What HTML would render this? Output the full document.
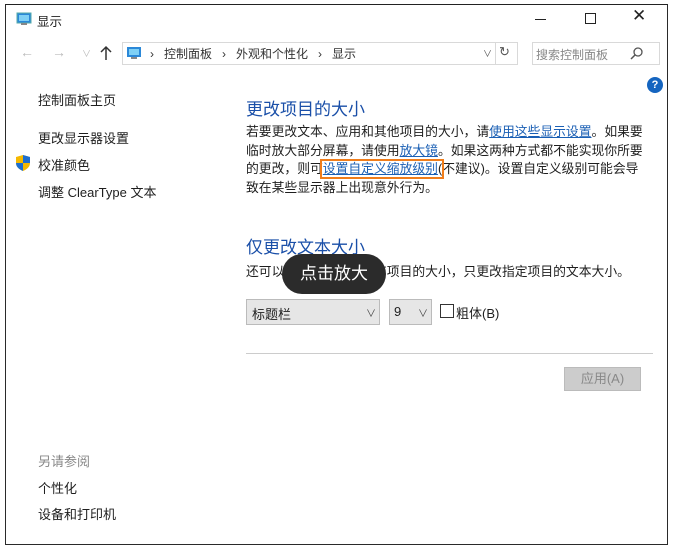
<!DOCTYPE html>
<html><head><meta charset="utf-8"><style>
*{margin:0;padding:0;box-sizing:border-box}
body{width:681px;height:548px;background:#fff;position:relative;overflow:hidden;font-family:"Liberation Sans","Noto Sans CJK SC",sans-serif;color:#1e1e1e}
.a{position:absolute;white-space:nowrap}
.win{position:absolute;left:5px;top:4px;width:663px;height:541px;border:1px solid #2a2a2a;border-top:1.5px solid #222}
.link{color:#1a5fb4;text-decoration:underline}
.t13{font-size:13px}
</style></head><body>
<div class="win"></div>
<svg class="a" style="left:16px;top:12px" width="16" height="14"><rect x="1" y="1" width="14" height="10" fill="#2b88d8" stroke="#5aa" stroke-width="1"/><rect x="3" y="3" width="10" height="6" fill="#7fd0f5"/><rect x="5" y="11" width="6" height="2" fill="#888"/></svg>
<div class="a t13" style="left:37px;top:11px;font-size:12.5px">显示</div>
<div class="a" style="left:535px;top:19px;width:11px;height:1px;background:#222"></div>
<div class="a" style="left:585px;top:13px;width:11px;height:11px;border:1px solid #222"></div>
<div class="a" style="left:632px;top:6px;font-size:17px;color:#222">✕</div>
<div class="a" style="left:20px;top:44px;color:#bbb;font-size:14px">←</div>
<div class="a" style="left:52px;top:44px;color:#bbb;font-size:14px">→</div>
<div class="a" style="left:82px;top:47px;color:#bbb;font-size:9px">∨</div>
<svg class="a" style="left:100px;top:45px" width="12" height="16"><path d="M6 2 V15 M1 7 L6 2 L11 7" stroke="#333" stroke-width="1.5" fill="none"/></svg>
<div class="a" style="left:122px;top:42px;width:396px;height:23px;border:1px solid #d9d9d9"></div>
<div class="a" style="left:495px;top:42px;width:1px;height:23px;background:#d9d9d9"></div>
<svg class="a" style="left:126px;top:46px" width="16" height="14"><rect x="1" y="1" width="14" height="10" fill="#2b88d8"/><rect x="3" y="3" width="10" height="6" fill="#7fd0f5"/><rect x="5" y="11" width="6" height="2" fill="#888"/></svg>
<div class="a" style="left:150px;top:45px;font-size:12px;color:#333">›&nbsp;&nbsp; 控制面板 &nbsp;&nbsp;›&nbsp;&nbsp; 外观和个性化 &nbsp;&nbsp;›&nbsp;&nbsp; 显示</div>
<div class="a" style="left:483px;top:47px;font-size:9px;color:#555">∨</div>
<div class="a" style="left:499px;top:44px;font-size:13px;color:#555">↻</div>
<div class="a" style="left:532px;top:42px;width:128px;height:23px;border:1px solid #d9d9d9"></div>
<div class="a" style="left:536px;top:46px;font-size:12px;color:#888">搜索控制面板</div>
<svg class="a" style="left:630px;top:46px" width="14" height="14"><circle cx="8" cy="6" r="4" stroke="#555" stroke-width="1.3" fill="none"/><path d="M5 9 L1 13" stroke="#555" stroke-width="1.5"/></svg>
<div class="a" style="left:647px;top:77px;width:16px;height:16px;border-radius:50%;background:#1565c0;color:#fff;font-size:11px;font-weight:bold;text-align:center;line-height:16px">?</div>
<div class="a t13" style="left:38px;top:90px">控制面板主页</div>
<div class="a t13" style="left:38px;top:128px">更改显示器设置</div>
<svg class="a" style="left:15px;top:154px" width="16" height="18"><path d="M8 1 L15 3 L15 9 Q15 14 8 17 Q1 14 1 9 L1 3 Z" fill="#f5b800"/><path d="M8 1 L15 3 L15 9 L8 9 Z M8 9 L8 17 Q1 14 1 9 Z" fill="#1e6fd0"/></svg>
<div class="a t13" style="left:38px;top:155px">校准颜色</div>
<div class="a t13" style="left:38px;top:182px">调整 ClearType 文本</div>
<div class="a t13" style="left:38px;top:451px;color:#888">另请参阅</div>
<div class="a t13" style="left:38px;top:478px">个性化</div>
<div class="a t13" style="left:38px;top:504px">设备和打印机</div>
<div class="a" style="left:246px;top:95px;font-size:17px;color:#1a4fa8">更改项目的大小</div>
<div class="a" style="left:246px;top:123px;line-height:18.5px;font-size:12.8px">若要更改文本、应用和其他项目的大小，请<span class="link">使用这些显示设置</span>。如果要<br>临时放大部分屏幕，请使用<span class="link">放大镜</span>。如果这两种方式都不能实现你所要<br>的更改，则可<span class="link">设置自定义缩放级别</span>(不建议)。设置自定义级别可能会导<br>致在某些显示器上出现意外行为。</div>
<div class="a" style="left:320px;top:159px;width:124px;height:20px;border:2px solid #f07d1a"></div>
<div class="a" style="left:246px;top:233px;font-size:17px;color:#1a4fa8">仅更改文本大小</div>
<div class="a" style="left:246px;top:261px;font-size:12.8px">还可以不更改桌面上所有项目的大小，只更改指定项目的文本大小。</div>
<div class="a" style="left:282px;top:254px;width:104px;height:40px;border-radius:20px;background:#2b2b2b;color:#fff;font-size:17px;text-align:center;line-height:40px">点击放大</div>
<div class="a" style="left:246px;top:299px;width:134px;height:26px;background:#e6e6e6;border:1px solid #bbb"></div>
<div class="a t13" style="left:252px;top:304px">标题栏</div>
<div class="a" style="left:366px;top:305px;font-size:10px;color:#444">∨</div>
<div class="a" style="left:389px;top:299px;width:43px;height:26px;background:#e6e6e6;border:1px solid #bbb"></div>
<div class="a t13" style="left:394px;top:304px">9</div>
<div class="a" style="left:418px;top:305px;font-size:10px;color:#444">∨</div>
<div class="a" style="left:440px;top:304px;width:14px;height:14px;border:1px solid #333"></div>
<div class="a t13" style="left:456px;top:303px">粗体(B)</div>
<div class="a" style="left:246px;top:353px;width:407px;height:1px;background:#ccc"></div>
<div class="a" style="left:564px;top:367px;width:77px;height:24px;background:#ccc;border:1px solid #bbb;color:#888;font-size:13px;text-align:center;line-height:22px">应用(A)</div>
</body></html>
